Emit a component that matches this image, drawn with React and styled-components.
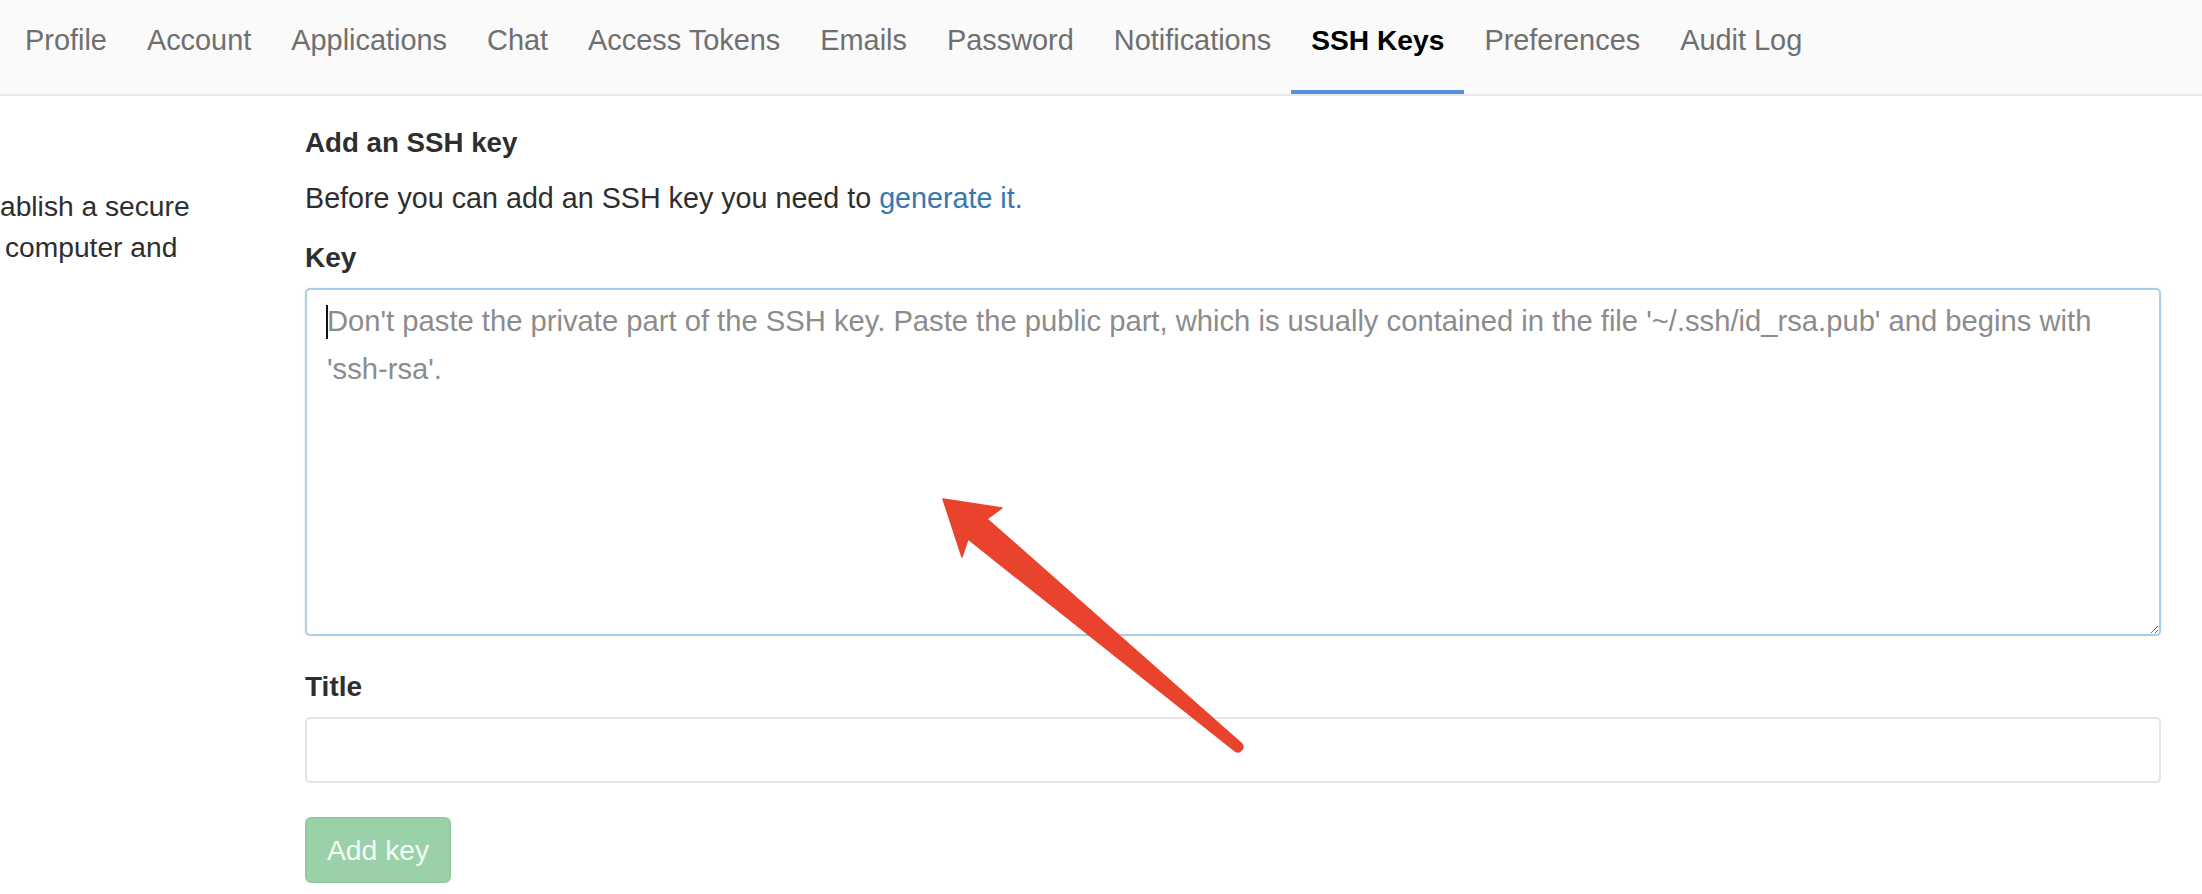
import styled, { createGlobalStyle } from "styled-components";

const GlobalStyle = createGlobalStyle`
  html, body {
    margin: 0;
    padding: 0;
    background: #fff;
    font-family: "Liberation Sans", Arial, sans-serif;
    color: #2e2e2e;
  }
`;

const Page = styled.div`
  position: relative;
  width: 2202px;
  height: 894px;
  overflow: hidden;
`;

const NavBar = styled.nav`
  display: flex;
  height: 94px;
  padding-left: 5px;
  background: #fafafa;
  border-bottom: 2px solid #e8e8e8;
`;

const Tab = styled.a`
  box-sizing: border-box;
  height: 94px;
  padding: 20px 20px 0;
  line-height: 40px;
  font-size: ${({ active }) => (active ? "28.2px" : "28.9px")};
  color: ${({ active }) => (active ? "#000" : "#6f6f6f")};
  font-weight: ${({ active }) => (active ? 700 : 400)};
  border-bottom: 4px solid ${({ active }) => (active ? "#5a8fdf" : "transparent")};
  white-space: nowrap;
  cursor: pointer;
`;

const Main = styled.div`
  display: flex;
`;

const Sidebar = styled.div`
  width: 305px;
  flex-shrink: 0;
  padding-top: 90px;
  font-size: 28.2px;
  line-height: 41px;
  color: #2e2e2e;
`;

const SideLine = styled.div`
  white-space: nowrap;
  margin-left: ${({ indent }) => indent || 0}px;
`;

const Form = styled.form`
  display: flex;
  flex-direction: column;
  width: 1856px;
  padding-top: 27px;
`;

const Heading = styled.h4`
  margin: 0;
  font-size: 27.7px;
  line-height: 40px;
  font-weight: 700;
  color: #2e2e2e;
`;

const Intro = styled.p`
  margin: 15px 0 0;
  font-size: 28.7px;
  line-height: 40px;
`;

const Link = styled.a`
  color: #3777b0;
  text-decoration: none;
`;

const Label = styled.label`
  margin-top: ${({ top }) => top}px;
  font-size: 28px;
  line-height: 40px;
  font-weight: 700;
  color: #2e2e2e;
`;

const AreaWrap = styled.div`
  position: relative;
  margin-top: 10px;
`;

const KeyArea = styled.textarea`
  display: block;
  box-sizing: border-box;
  width: 100%;
  height: 348px;
  padding: 8px 20px;
  font-family: inherit;
  font-size: 29.2px;
  line-height: 47.5px;
  color: #2e2e2e;
  border: 2px solid #a6cfeb;
  border-radius: 5px;
  box-shadow: 0 0 3px rgba(255, 228, 190, 0.9);
  outline: none;

  &::placeholder {
    color: #8c8c8c;
  }
`;

const Caret = styled.span`
  position: absolute;
  left: 21px;
  top: 17px;
  width: 2px;
  height: 34px;
  background: #111;
`;

const TitleInput = styled.input`
  box-sizing: border-box;
  margin-top: 10px;
  width: 100%;
  height: 66px;
  padding: 0 20px;
  font-family: inherit;
  font-size: 28px;
  border: 2px solid #e5e5e5;
  border-radius: 5px;
  outline: none;
`;

const SubmitButton = styled.button`
  box-sizing: border-box;
  align-self: flex-start;
  margin-top: 34px;
  height: 66px;
  padding: 0 20px;
  font-family: inherit;
  font-size: 28.3px;
  color: #f4fbf6;
  background: #9bd1a9;
  border: 2px solid #93cba1;
  border-radius: 6px;
`;

const Annotation = styled.svg`
  position: absolute;
  left: 0;
  top: 0;
  pointer-events: none;
`;

const tabs = [
  "Profile",
  "Account",
  "Applications",
  "Chat",
  "Access Tokens",
  "Emails",
  "Password",
  "Notifications",
  "SSH Keys",
  "Preferences",
  "Audit Log",
];

const App = () => {
  return (
    <Page>
      <GlobalStyle />
      <NavBar>
        {tabs.map((t) => (
          <Tab key={t} active={t === "SSH Keys" ? 1 : 0}>
            {t}
          </Tab>
        ))}
      </NavBar>
      <Main>
        <Sidebar>
          <SideLine>ablish a secure</SideLine>
          <SideLine indent={5}>computer and</SideLine>
        </Sidebar>
        <Form onSubmit={(e) => e.preventDefault()}>
          <Heading>Add an SSH key</Heading>
          <Intro>
            Before you can add an SSH key you need to <Link href="#">generate it.</Link>
          </Intro>
          <Label top={20}>Key</Label>
          <AreaWrap>
            <KeyArea placeholder="Don't paste the private part of the SSH key. Paste the public part, which is usually contained in the file '~/.ssh/id_rsa.pub' and begins with 'ssh-rsa'." />
            <Caret />
          </AreaWrap>
          <Label top={31}>Title</Label>
          <TitleInput type="text" />
          <SubmitButton type="submit" disabled>
            Add key
          </SubmitButton>
        </Form>
      </Main>
      {/* red annotation arrow drawn over the form */}
      <Annotation width="2202" height="894">
        <path
          d="M943 499 L1002 508 L987 519 L1241.5 743.5 A5 5 0 0 1 1235 751 L968 539 L962 557 Z"
          fill="#e9432d"
          stroke="#e9432d"
          strokeWidth="1.5"
          strokeLinejoin="round"
        />
      </Annotation>
    </Page>
  );
};

export default App;
